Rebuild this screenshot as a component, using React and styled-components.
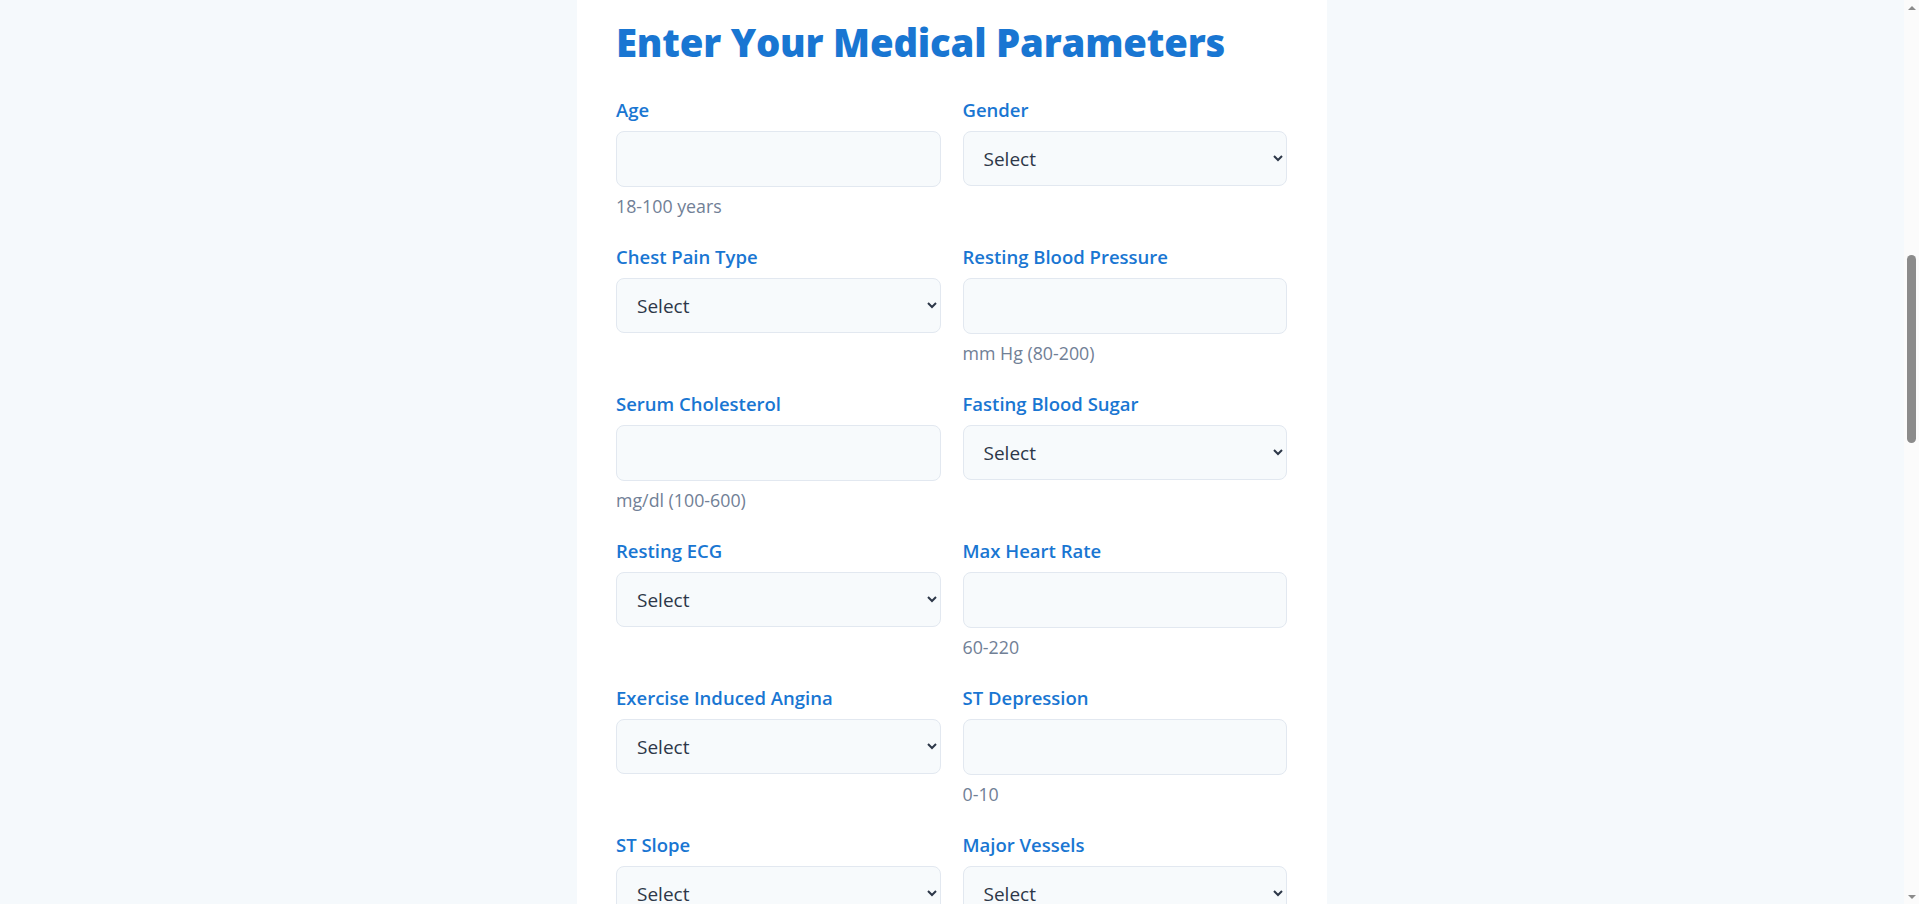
import React, { useState } from 'react';
import styled, { createGlobalStyle } from 'styled-components';

const GlobalStyle = createGlobalStyle`
    html, body {
        margin: 0;
        padding: 0;
        background: #f5f9fc;
        font-family: "Open Sans", "Noto Sans", Arial, sans-serif;
    }
    * { box-sizing: border-box; }
`;

const Page = styled.div`
    min-height: 100vh;
    padding: 0 15px 60px 0;
`;

const Card = styled.div`
    background: #ffffff;
    width: 750px;
    margin: 0 auto;
    padding: 18px 40px 40px 39px;
    border-radius: 0 0 16px 16px;
`;

const Title = styled.h2`
    font-size: 38.3px;
    font-weight: 800;
    line-height: 48px;
    letter-spacing: -0.2px;
    color: #1976d2;
    margin: 0 0 32px 0;
`;

const Grid = styled.div`
    display: grid;
    grid-template-columns: 1fr 1fr;
    column-gap: 22px;
    row-gap: 28px;
    align-items: start;
`;

const Field = styled.div`
    display: flex;
    flex-direction: column;
`;

const Label = styled.label`
    font-size: 18.5px;
    font-weight: 600;
    line-height: 24px;
    color: #1976d2;
    margin-bottom: 9px;
`;

const Input = styled.input`
    width: 100%;
    height: 56px;
    padding: 0 16px;
    border: 1px solid #e2e8f0;
    border-radius: 8px;
    background: #f7fafc;
    font-family: inherit;
    font-size: 19px;
    color: #2d3748;
    &:focus {
        outline: none;
        border-color: #1976d2;
    }
`;

const Select = styled.select`
    width: 100%;
    height: 55px;
    padding: 0 16px;
    border: 1px solid #e2e8f0;
    border-radius: 8px;
    background: #f7fafc;
    font-family: inherit;
    font-size: 19px;
    color: #2d3748;
    &:focus {
        outline: none;
        border-color: #1976d2;
    }
`;

const Hint = styled.span`
    font-size: 17.8px;
    line-height: 22px;
    color: #718096;
    margin-top: 8px;
`;

const SubmitButton = styled.button`
    margin-top: 36px;
    width: 100%;
    height: 56px;
    border: none;
    border-radius: 10px;
    background: #1976d2;
    color: white;
    font-family: inherit;
    font-size: 18px;
    font-weight: 700;
    cursor: pointer;
`;

// fake classic scrollbar, as seen in the screenshot
const ScrollRail = styled.div`
    position: fixed;
    top: 0;
    right: 0;
    width: 15px;
    height: 100vh;
    background: #fbfbfb;
    display: flex;
    flex-direction: column;
    align-items: center;
`;

const Arrow = styled.div`
    width: 15px;
    height: 15px;
    display: flex;
    align-items: center;
    justify-content: center;
    &::before {
        content: '';
        border-left: 4px solid transparent;
        border-right: 4px solid transparent;
        ${p => p.$down
            ? 'border-top: 4px solid #8b8b8b;'
            : 'border-bottom: 4px solid #8b8b8b;'}
    }
`;

const Track = styled.div`
    flex: 1;
    width: 100%;
    display: flex;
    justify-content: center;
`;

const Thumb = styled.div`
    width: 9px;
    height: 188px;
    margin-top: 240px;
    border-radius: 5px;
    background: #8b8b8b;
`;

const fields = [
    { name: 'age', label: 'Age', type: 'number', hint: '18-100 years' },
    { name: 'sex', label: 'Gender', options: ['Male', 'Female'] },
    { name: 'cp', label: 'Chest Pain Type', options: ['Typical Angina', 'Atypical Angina', 'Non-anginal Pain', 'Asymptomatic'] },
    { name: 'trestbps', label: 'Resting Blood Pressure', type: 'number', hint: 'mm Hg (80-200)' },
    { name: 'chol', label: 'Serum Cholesterol', type: 'number', hint: 'mg/dl (100-600)' },
    { name: 'fbs', label: 'Fasting Blood Sugar', options: ['> 120 mg/dl', '<= 120 mg/dl'] },
    { name: 'restecg', label: 'Resting ECG', options: ['Normal', 'ST-T Abnormality', 'LV Hypertrophy'] },
    { name: 'thalach', label: 'Max Heart Rate', type: 'number', hint: '60-220' },
    { name: 'exang', label: 'Exercise Induced Angina', options: ['Yes', 'No'] },
    { name: 'oldpeak', label: 'ST Depression', type: 'number', hint: '0-10' },
    { name: 'slope', label: 'ST Slope', options: ['Upsloping', 'Flat', 'Downsloping'] },
    { name: 'ca', label: 'Major Vessels', options: ['0', '1', '2', '3'] },
    { name: 'thal', label: 'Thalassemia', options: ['Normal', 'Fixed Defect', 'Reversible Defect'] },
];

export default function App() {
    const [values, setValues] = useState({});

    const handleChange = (e) => {
        const { name, value } = e.target;
        setValues(prev => ({ ...prev, [name]: value }));
    };

    return (
        <Page>
            <GlobalStyle />
            <Card>
                <Title>Enter Your Medical Parameters</Title>
                <form onSubmit={(e) => e.preventDefault()}>
                    <Grid>
                        {fields.map(f => (
                            <Field key={f.name}>
                                <Label htmlFor={f.name}>{f.label}</Label>
                                {f.options ? (
                                    <Select id={f.name} name={f.name} value={values[f.name] || ''} onChange={handleChange}>
                                        <option value="">Select</option>
                                        {f.options.map(o => <option key={o} value={o}>{o}</option>)}
                                    </Select>
                                ) : (
                                    <Input id={f.name} name={f.name} type={f.type} value={values[f.name] || ''} onChange={handleChange} />
                                )}
                                {f.hint && <Hint>{f.hint}</Hint>}
                            </Field>
                        ))}
                    </Grid>
                    <SubmitButton type="submit">Predict Heart Disease Risk</SubmitButton>
                </form>
            </Card>
            <ScrollRail>
                <Arrow />
                <Track><Thumb /></Track>
                <Arrow $down />
            </ScrollRail>
        </Page>
    );
}
